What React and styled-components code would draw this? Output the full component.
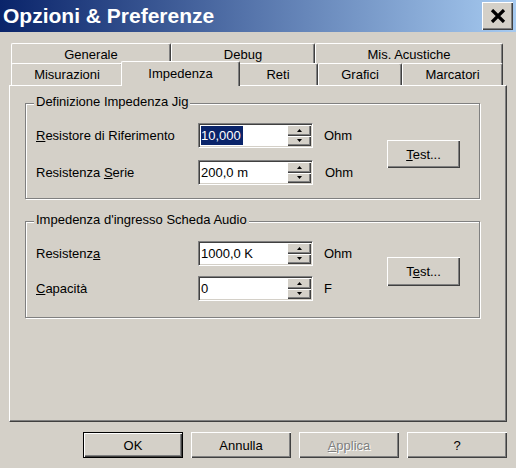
import React from 'react';
import styled, { createGlobalStyle, css } from 'styled-components';

const Global = createGlobalStyle`
  html, body { margin: 0; padding: 0; background: #d4d0c8; }
  body { font-family: "Liberation Sans", Arial, sans-serif; font-size: 13px; color: #000; }
`;

const Window = styled.div`
  width: 516px;
  height: 468px;
  display: flex;
  flex-direction: column;
  background: #d4d0c8;
  overflow: hidden;
`;

const TitleBar = styled.div`
  height: 32px;
  flex: 0 0 32px;
  display: flex;
  align-items: center;
  justify-content: space-between;
  padding: 0 3px 0 3px;
  background: linear-gradient(to right, #0a246a, #a6caf0);
`;

const Title = styled.div`
  color: #fff;
  font-weight: bold;
  font-size: 21px;
  line-height: 24px;
`;

const CloseButton = styled.div`
  width: 31px;
  height: 28px;
  box-sizing: border-box;
  background: #d4d0c8;
  box-shadow: inset 1px 1px #fff, inset -1px -1px #404040, inset -2px -2px #808080;
  display: flex;
  align-items: center;
  justify-content: center;
  padding-bottom: 1px;
`;

const Body = styled.div`
  flex: 1;
  display: flex;
  flex-direction: column;
  padding: 11px 9px 0;
`;

const TabRow = styled.div`
  display: flex;
  height: 22px;
  padding: 0 4px 0 2px;
  margin-bottom: ${p => (p.$back ? '-2px' : '0')};
`;

const Tab = styled.div`
  flex: 0 0 ${p => p.$w}px;
  box-sizing: border-box;
  display: flex;
  align-items: center;
  justify-content: center;
  background: #d4d0c8;
  border-top: 1px solid #fff;
  border-left: 1px solid #fff;
  border-right: 1px solid #404040;
  border-radius: 2px 2px 0 0;
  box-shadow: inset -1px 0 #808080;
  white-space: nowrap;
  ${p =>
    p.$active &&
    css`
      flex-basis: ${p.$w + 4}px;
      margin: -2px -2px -1px;
      position: relative;
      z-index: 1;
      padding-bottom: 2px;
    `}
`;

const Panel = styled.div`
  height: 337px;
  box-sizing: border-box;
  border-top: 1px solid #fff;
  border-left: 1px solid #fff;
  border-right: 1px solid #404040;
  border-bottom: 1px solid #404040;
  box-shadow: inset -1px -1px #808080;
  padding: 17px 26px 0 15px;
  display: flex;
  flex-direction: column;
  gap: 22px;
`;

const GroupBox = styled.div`
  position: relative;
  height: ${p => p.$h}px;
  box-sizing: border-box;
  border: 1px solid #808080;
  box-shadow: inset 1px 1px #fff, 1px 1px #fff;
  padding: 19px 0 0 10px;
  display: grid;
  grid-template-columns: 162px 115px 74px 73px;
  grid-template-rows: 25px 25px;
  row-gap: ${p => p.$gap}px;
  align-content: start;
`;

const Caption = styled.span`
  position: absolute;
  top: -10px;
  left: 8px;
  padding: 0 2px;
  background: #d4d0c8;
  line-height: 16px;
`;

const Label = styled.div`
  align-self: center;
  white-space: nowrap;
`;

const SpinBox = styled.div`
  box-sizing: border-box;
  display: flex;
  background: #fff;
  border-top: 1px solid #808080;
  border-left: 1px solid #808080;
  border-right: 1px solid #fff;
  border-bottom: 1px solid #fff;
  box-shadow: inset 1px 1px #404040, inset -1px -1px #d4d0c8;
  padding: 1px;
`;

const Value = styled.div`
  flex: 1;
  display: flex;
  align-items: center;
  padding-left: 1px;
  white-space: nowrap;
`;

const Selected = styled.span`
  background: #0a246a;
  color: #fff;
  line-height: 19px;
  padding: 0 2px 0 0;
`;

const SpinButtons = styled.div`
  width: 24px;
  display: flex;
  flex-direction: column;
`;

const SpinButton = styled.div`
  flex: 1;
  background: #d4d0c8;
  box-shadow: inset 1px 1px #fff, inset -1px -1px #404040, inset -2px -2px #808080;
  display: flex;
  align-items: center;
  justify-content: center;
`;

const Unit = styled.div`
  align-self: center;
  padding-left: ${p => p.$pad || 11}px;
`;

const Button = styled.button`
  font: inherit;
  color: #000;
  background: #d4d0c8;
  box-sizing: border-box;
  padding: 0;
  margin: 0;
  border: none;
  box-shadow: inset 1px 1px #fff, inset -1px -1px #404040, inset -2px -2px #808080;
  width: ${p => p.$w}px;
  height: ${p => p.$h}px;
  ${p =>
    p.$default &&
    css`
      border: 1px solid #000;
    `}
  ${p =>
    p.$disabled &&
    css`
      color: #808080;
      text-shadow: 1px 1px #fff;
    `}
`;

const TestButton = styled(Button)`
  grid-column: 4;
  grid-row: 1 / span 2;
  align-self: center;
`;

const Footer = styled.div`
  display: flex;
  justify-content: flex-end;
  gap: 8px;
  margin-top: 10px;
`;

const Arrow = ({ down }) => (
  <svg width="5" height="3" viewBox="0 0 5 3">
    <polygon points={down ? '0,0 5,0 2.5,3' : '2.5,0 5,3 0,3'} fill="#000" />
  </svg>
);

const Spinner = ({ children }) => (
  <SpinBox>
    <Value>{children}</Value>
    <SpinButtons>
      <SpinButton><Arrow /></SpinButton>
      <SpinButton><Arrow down /></SpinButton>
    </SpinButtons>
  </SpinBox>
);

export default function App() {
  return (
    <Window>
      <Global />
      <TitleBar>
        <Title>Opzioni &amp; Preferenze</Title>
        <CloseButton>
          <svg width="16" height="14" viewBox="0 0 16 14">
            <path d="M2 1 L14 13 M14 1 L2 13" stroke="#000" strokeWidth="3.2" />
          </svg>
        </CloseButton>
      </TitleBar>
      <Body>
        <TabRow $back>
          <Tab $w={160}>Generale</Tab>
          <Tab $w={144}>Debug</Tab>
          <Tab $w={188}>Mis. Acustiche</Tab>
        </TabRow>
        <TabRow>
          <Tab $w={112}>Misurazioni</Tab>
          <Tab $w={115} $active>Impedenza</Tab>
          <Tab $w={80}>Reti</Tab>
          <Tab $w={84}>Grafici</Tab>
          <Tab $w={101}>Marcatori</Tab>
        </TabRow>
        <Panel>
          <GroupBox $h={96} $gap={12}>
            <Caption>Definizione Impedenza Jig</Caption>
            <Label><u>R</u>esistore di Riferimento</Label>
            <Spinner><Selected>10,000</Selected></Spinner>
            <Unit>Ohm</Unit>
            <TestButton $w={73} $h={28}><u>T</u>est...</TestButton>
            <Label>Resistenza <u>S</u>erie</Label>
            <Spinner>200,0 m</Spinner>
            <Unit $pad={12}>Ohm</Unit>
          </GroupBox>
          <GroupBox $h={97} $gap={10}>
            <Caption>Impedenza d'ingresso Scheda Audio</Caption>
            <Label>Resistenz<u>a</u></Label>
            <Spinner>1000,0 K</Spinner>
            <Unit>Ohm</Unit>
            <TestButton $w={73} $h={29}>T<u>e</u>st...</TestButton>
            <Label><u>C</u>apacità</Label>
            <Spinner>0</Spinner>
            <Unit>F</Unit>
          </GroupBox>
        </Panel>
        <Footer>
          <Button $w={100} $h={26} $default>OK</Button>
          <Button $w={100} $h={26}>Annulla</Button>
          <Button $w={100} $h={26} $disabled><u>A</u>pplica</Button>
          <Button $w={100} $h={26}>?</Button>
        </Footer>
      </Body>
    </Window>
  );
}
